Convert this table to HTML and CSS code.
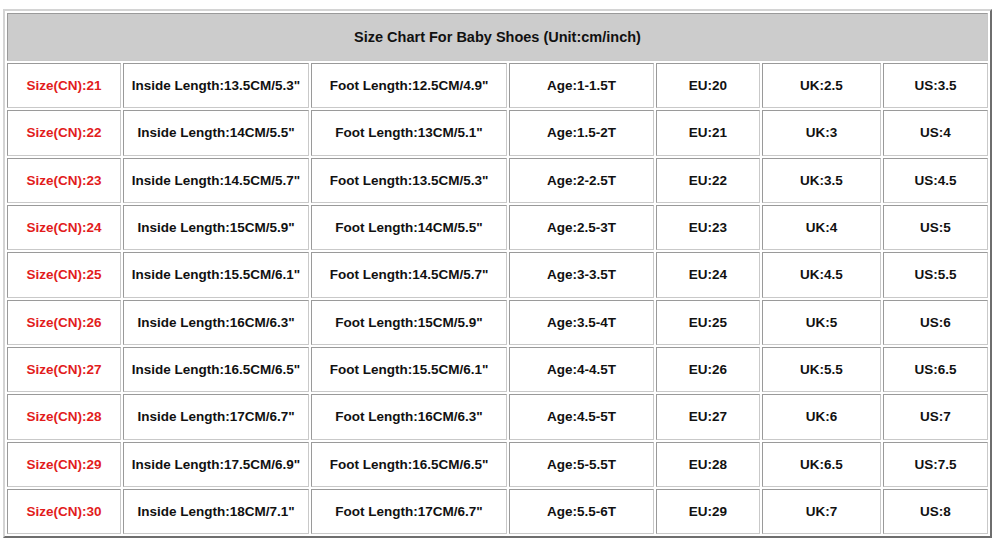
FILE: index.html
```html
<!DOCTYPE html>
<html>
<head>
<meta charset="utf-8">
<link rel="stylesheet" href="styles.css">
</head>
<body>
<div class="page">
<table class="chart">
<colgroup>
<col class="c1"><col class="c2"><col class="c3"><col class="c4"><col class="c5"><col class="c6"><col class="c7">
</colgroup>
<tr class="head"><td colspan="7">Size Chart For Baby Shoes (Unit:cm/inch)</td></tr>
<tr><td class="size">Size(CN):21</td><td>Inside Length:13.5CM/5.3"</td><td>Foot Length:12.5CM/4.9"</td><td>Age:1-1.5T</td><td>EU:20</td><td>UK:2.5</td><td>US:3.5</td></tr>
<tr><td class="size">Size(CN):22</td><td>Inside Length:14CM/5.5"</td><td>Foot Length:13CM/5.1"</td><td>Age:1.5-2T</td><td>EU:21</td><td>UK:3</td><td>US:4</td></tr>
<tr><td class="size">Size(CN):23</td><td>Inside Length:14.5CM/5.7"</td><td>Foot Length:13.5CM/5.3"</td><td>Age:2-2.5T</td><td>EU:22</td><td>UK:3.5</td><td>US:4.5</td></tr>
<tr><td class="size">Size(CN):24</td><td>Inside Length:15CM/5.9"</td><td>Foot Length:14CM/5.5"</td><td>Age:2.5-3T</td><td>EU:23</td><td>UK:4</td><td>US:5</td></tr>
<tr><td class="size">Size(CN):25</td><td>Inside Length:15.5CM/6.1"</td><td>Foot Length:14.5CM/5.7"</td><td>Age:3-3.5T</td><td>EU:24</td><td>UK:4.5</td><td>US:5.5</td></tr>
<tr><td class="size">Size(CN):26</td><td>Inside Length:16CM/6.3"</td><td>Foot Length:15CM/5.9"</td><td>Age:3.5-4T</td><td>EU:25</td><td>UK:5</td><td>US:6</td></tr>
<tr><td class="size">Size(CN):27</td><td>Inside Length:16.5CM/6.5"</td><td>Foot Length:15.5CM/6.1"</td><td>Age:4-4.5T</td><td>EU:26</td><td>UK:5.5</td><td>US:6.5</td></tr>
<tr><td class="size">Size(CN):28</td><td>Inside Length:17CM/6.7"</td><td>Foot Length:16CM/6.3"</td><td>Age:4.5-5T</td><td>EU:27</td><td>UK:6</td><td>US:7</td></tr>
<tr><td class="size">Size(CN):29</td><td>Inside Length:17.5CM/6.9"</td><td>Foot Length:16.5CM/6.5"</td><td>Age:5-5.5T</td><td>EU:28</td><td>UK:6.5</td><td>US:7.5</td></tr>
<tr><td class="size">Size(CN):30</td><td>Inside Length:18CM/7.1"</td><td>Foot Length:17CM/6.7"</td><td>Age:5.5-6T</td><td>EU:29</td><td>UK:7</td><td>US:8</td></tr>
</table>
</div>
</body>
</html>
```
FILE: styles.css
```css
html, body {
  margin: 0;
  padding: 0;
  background: #ffffff;
}
.page {
  padding: 9px 0 0 3px;
}
.chart {
  table-layout: fixed;
  width: 989px;
  border-collapse: separate;
  border-spacing: 2px;
  border-style: solid;
  border-width: 2px;
  border-color: #d4d4d4 #6e6e6e #6e6e6e #d4d4d4;
  font-family: "Liberation Sans", Arial, sans-serif;
  font-weight: bold;
  font-size: 13.5px;
  color: #111111;
}
.c1 { width: 114px; }
.c2 { width: 186px; }
.c3 { width: 196px; }
.c4 { width: 145px; }
.c5 { width: 104px; }
.c6 { width: 119px; }
.c7 { width: 105px; }
.chart td {
  box-sizing: border-box;
  padding: 0;
  text-align: center;
  vertical-align: middle;
  border-style: solid;
  border-width: 1px;
  border-color: #9a9a9a #c9c9c9 #c9c9c9 #9a9a9a;
  white-space: nowrap;
  overflow: hidden;
}
.chart tr {
  height: 45.33px;
}
.chart tr.head {
  height: 48px;
}
.head td {
  background: #cccccc;
  font-size: 14.5px;
  padding-bottom: 1px;
}
.chart td.size {
  color: #e21c1c;
}
```
